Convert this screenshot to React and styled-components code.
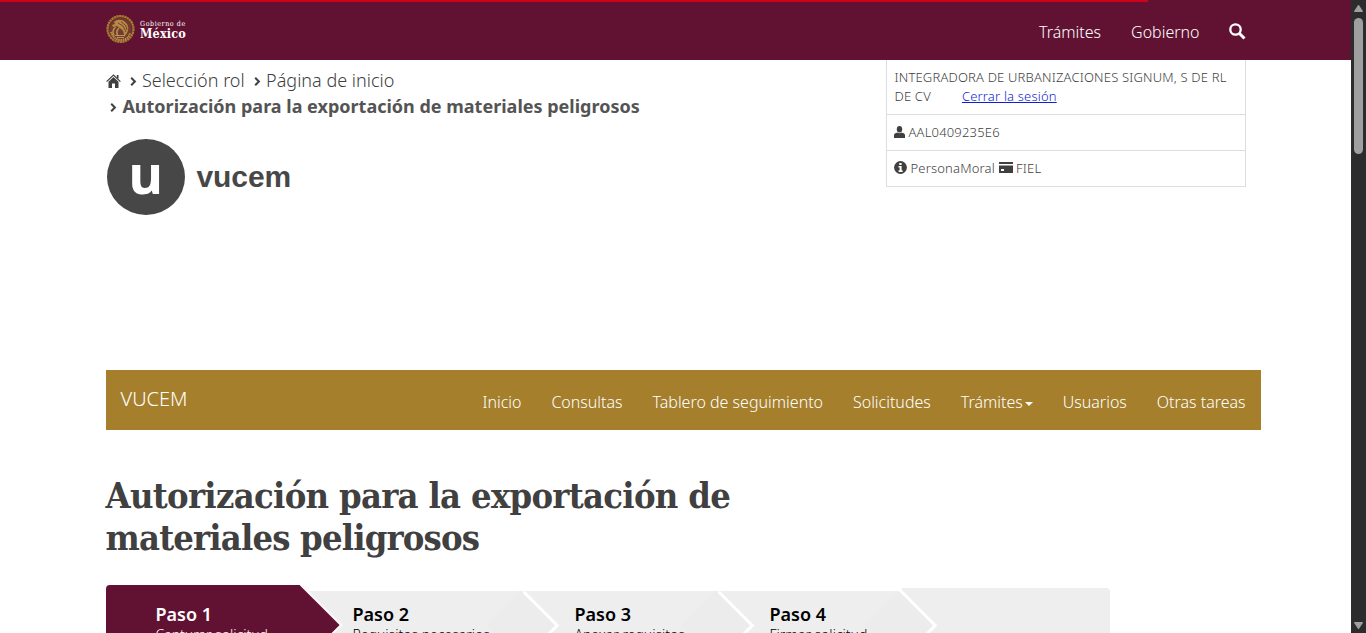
import React from "react";
import styled, { createGlobalStyle, css } from "styled-components";

const Global = createGlobalStyle`
  * { box-sizing: border-box; }
  html, body { margin: 0; padding: 0; overflow: hidden; background: #fff; }
  body { font-family: "Noto Sans", "Open Sans", sans-serif; font-weight: 300; color: #404041; }
`;

const Page = styled.div`
  display: flex;
  width: 1366px;
  height: 633px;
  overflow: hidden;
`;
const Content = styled.div`
  width: 1351px;
  height: 633px;
  overflow: hidden;
`;
const Progress = styled.div`
  width: 1148px;
  height: 2px;
  background: #d0021b;
`;
const Header = styled.header`
  height: 60px;
  background: #611232;
`;
const HeaderRow = styled.div`
  display: flex;
  justify-content: space-between;
  padding: 0 105px 0 106px;
  height: 58px;
`;
const Brand = styled.div`
  display: flex;
  align-items: flex-start;
  gap: 5px;
  padding-top: 12px;
`;
const BrandText = styled.div`
  display: flex;
  flex-direction: column;
  padding-top: 6px;
  color: #fff;
  font-family: "DejaVu Serif Condensed", "DejaVu Serif", serif;
`;
const BrandSmall = styled.span`
  font-size: 7px;
  font-weight: 400;
  line-height: 8px;
  letter-spacing: 0.6px;
`;
const BrandLarge = styled.span`
  font-size: 12.5px;
  font-weight: 700;
  line-height: 11px;
  letter-spacing: 0.15px;
`;
const TopNav = styled.nav`
  display: flex;
  gap: 30px;
  padding-top: 19px;
`;
const NavItem = styled.a`
  color: #fff;
  font-size: 16px;
  line-height: 23px;
  white-space: nowrap;
`;
const SearchSlot = styled.span`
  display: flex;
  width: 16.5px;
  padding-top: 2px;
  svg { flex: none; margin-left: -0.5px; }
`;

const Intro = styled.section`
  display: flex;
  justify-content: space-between;
  height: 310px;
  padding: 0 105px 0 106px;
`;
const IntroLeft = styled.div`
  padding-top: 7px;
`;
const CrumbRow = styled.div`
  display: flex;
  align-items: center;
  height: 26px;
  font-size: 18px;
  line-height: 26px;
  white-space: nowrap;
  ${(p) => p.$active && css`
    font-weight: 700;
    color: #545454;
    padding-left: 4px;
  `}
`;
const Crumb = styled.span`
  margin-right: 9px;
`;
const Chevron = styled.svg`
  width: 7px;
  height: 9px;
  margin-right: 5.4px;
  margin-top: 3px;
`;
const House = styled.svg`
  width: 15px;
  height: 14px;
  margin-left: -0.5px;
  margin-right: 9px;
  margin-top: 1px;
`;
const Logo = styled.div`
  display: flex;
  align-items: center;
  gap: 12px;
  margin: 20px 0 0 1px;
  color: #474747;
`;
const LogoMark = styled.div`
  display: flex;
  justify-content: center;
  width: 77.5px;
  height: 76px;
  border-radius: 50%;
  background: #474747;
  color: #fff;
  font: 700 53px/70px "Noto Sans", sans-serif;
`;
const LogoName = styled.span`
  font: 700 30px/36px "Liberation Sans", sans-serif;
  letter-spacing: -0.1px;
`;

const UserTable = styled.div`
  width: 360px;
  height: 127px;
  border: 1px solid #ddd;
  border-top: 0;
  font-size: 13px;
  line-height: 19px;
  letter-spacing: 0.18px;
`;
const UserCell = styled.div`
  display: flex;
  align-items: center;
  height: 36px;
  padding-left: 7px;
  border-top: 1px solid #ddd;
  white-space: nowrap;
  svg { margin-right: 3.5px; margin-top: -2px; flex: none; }
`;
const UserName = styled.div`
  height: 54px;
  padding: 8px 0 0 7.5px;
  white-space: nowrap;
`;
const Logout = styled.a`
  margin-left: 31px;
  color: #0f1fd6;
  text-decoration: underline;
`;

const MainBar = styled.nav`
  display: flex;
  justify-content: space-between;
  width: 1155px;
  height: 60px;
  margin-left: 106px;
  padding: 0 15.4px 0 14.5px;
  background: #a57f2c;
`;
const BarBrand = styled.span`
  color: #fff;
  font-size: 20px;
  line-height: 58px;
`;
const BarLinks = styled.div`
  display: flex;
  gap: 29.9px;
  padding-top: 21px;
`;
const Caret = styled.span`
  display: inline-block;
  margin-left: 2px;
  vertical-align: middle;
  border: 4px solid transparent;
  border-top-color: #fff;
  border-bottom: 0;
`;

const Title = styled.h1`
  margin: 44px 0 0 105.5px;
  font: 700 36px/42px "DejaVu Serif Condensed", "DejaVu Serif", serif;
  color: #404041;
  white-space: nowrap;
`;
const TitleLine = styled.span`
  display: block;
  letter-spacing: ${(p) => p.$ls}px;
`;

const Wizard = styled.div`
  display: flex;
  align-items: flex-start;
  width: 1004px;
  height: 80px;
  margin: 27px 0 0 106px;
`;
const Step = styled.div`
  position: relative;
  flex: none;
  width: ${(p) => p.$w}px;
  height: 80px;
  margin-top: 6px;
  padding: 11px 0 0 ${(p) => p.$pl}px;
  background: #eee;
  color: #000;
  z-index: ${(p) => p.$z};
  &::after {
    content: "";
    position: absolute;
    z-index: -1;
    top: 10px;
    right: -25px;
    width: 49px;
    height: 49px;
    transform: rotate(45deg);
    background: #ececec;
    box-shadow: 3px -3px 0 #fff;
  }
  ${(p) => p.$current && css`
    margin-top: 0;
    padding-top: 17px;
    background: #611232;
    color: #fff;
    border-radius: 4px 0 0 0;
    &::after {
      top: 12px;
      right: -28px;
      width: 56px;
      height: 56px;
      background: #611232;
      box-shadow: 2px -2px 0 #fff;
    }
  `}
`;
const WizardEnd = styled.div`
  flex: 1;
  height: 80px;
  margin-top: 3px;
  margin-left: 4px;
  background: #eee;
  border-radius: 0 4px 0 0;
`;
const StepName = styled.div`
  font-size: 18px;
  font-weight: 600;
  line-height: 24px;
  white-space: nowrap;
`;
const StepText = styled.div`
  font-size: 14px;
  line-height: 17px;
  white-space: nowrap;
`;

const ScrollTrack = styled.div`
  display: flex;
  flex-direction: column;
  align-items: center;
  width: 15px;
  height: 633px;
  padding: 5px 0 4px;
  background: #2c2c2c;
`;
const Thumb = styled.div`
  width: 9px;
  height: 136px;
  margin: 6px 0 auto;
  border-radius: 5px;
  background: #9f9f9f;
`;

const Emblem = () => (
  <svg width="29" height="30" viewBox="0 0 29 30" fill="none">
    <circle cx="14.5" cy="15" r="13" fill="#74392f" stroke="#a57f2c" strokeWidth="2.2" strokeDasharray="2.2 .5" />
    <circle cx="14.5" cy="15" r="11.2" stroke="#6f2a33" strokeWidth=".9" />
    <path d="M8 8c3-3 8-3 11 0 4 3 4 8 2 11l-3 4c0-3 0-6-3-8l-4-3-4 1-1-2 3-1z" fill="#b38c42" />
    <path d="M9.500 13c-3 3-3 6-1.500 8.500M13 14c-2 2-3 5-1 8" stroke="#b58f4a" strokeWidth="1.6" />
    <path d="M12 9l5 3 3 6M15 7.500l5 4.500 1 4" stroke="#6f2a33" strokeWidth=".8" />
    <path d="M5 18c2 6 6 8 10 8s8-2 9-7" stroke="#b58f4a" strokeWidth="2" strokeDasharray="1.6 .6" />
    <path d="M9 21.500h10M11 23.500h7" stroke="#bc955c" strokeWidth="1.1" />
  </svg>
);
const Chev = () => (
  <Chevron viewBox="0 0 7 9" fill="none" stroke="#404041" strokeWidth="2">
    <path d="M1.2 .8 4.9 4.5 1.2 8.2" />
  </Chevron>
);
const Arrow = ({ down }) => (
  <svg width="9" height="7" viewBox="0 0 9 7" fill="#9f9f9f">
    <path d={down ? "M0 .7Q0 0 .8 0h7.4Q9 0 9 .7L5.2 6.4q-.7 1-1.4 0z" : "M0 6.3Q0 7 .8 7h7.4Q9 7 9 6.3L5.2.6q-.7-1-1.4 0z"} />
  </svg>
);

export default function App() {
  return (
    <>
      <Global />
      <Page>
        <Content>
          <Header>
            <Progress />
            <HeaderRow>
              <Brand>
                <Emblem />
                <BrandText>
                  <BrandSmall>Gobierno de</BrandSmall>
                  <BrandLarge>México</BrandLarge>
                </BrandText>
              </Brand>
              <TopNav>
                <NavItem>Trámites</NavItem>
                <NavItem>Gobierno</NavItem>
                <SearchSlot>
                  <svg width="17" height="17" viewBox="0 0 17 17" fill="none" stroke="#fff">
                    <circle cx="6.5" cy="6.5" r="5.2" strokeWidth="2.3" />
                    <path d="m10.5 10.5 5 5" strokeWidth="3" />
                  </svg>
                </SearchSlot>
              </TopNav>
            </HeaderRow>
          </Header>
          <Intro>
            <IntroLeft>
              <CrumbRow>
                <House viewBox="0 0 15 14">
                  <path d="M.6 7.6 7.5 1l6.9 6.6" fill="none" stroke="#404041" strokeWidth="1.2" />
                  <path d="M2.5 7.8 7.5 3l5 4.8V14H9V9.5H6V14H2.5z" fill="#404041" />
                  <path d="M10.8 1h1.7v4l-1.7-1.7z" fill="#404041" />
                </House>
                <Chev />
                <Crumb>Selección rol</Crumb>
                <Chev />
                <Crumb>Página de inicio</Crumb>
              </CrumbRow>
              <CrumbRow $active>
                <Chev />
                <Crumb>Autorización para la exportación de materiales peligrosos</Crumb>
              </CrumbRow>
              <Logo>
                <LogoMark>u</LogoMark>
                <LogoName>vucem</LogoName>
              </Logo>
            </IntroLeft>
            <UserTable>
              <UserName>
                INTEGRADORA DE URBANIZACIONES SIGNUM, S DE RL
                <br />
                DE CV
                <Logout>Cerrar la sesión</Logout>
              </UserName>
              <UserCell>
                <svg width="11" height="12" viewBox="0 0 11 12" fill="#404041">
                  <ellipse cx="5.5" cy="3.2" rx="2.7" ry="3.2" />
                  <path d="M0 12V9.2Q0 7.5 3.6 6.6q1.9 1.2 3.8 0Q11 7.5 11 9.2V12z" />
                </svg>
                AAL0409235E6
              </UserCell>
              <UserCell>
                <svg width="13" height="13" viewBox="0 0 13 13">
                  <circle cx="6.5" cy="6.5" r="6.4" fill="#404041" />
                  <path d="M5.3 2h2.3v2H5.3zM4.5 5h3.1v4.2h1V11h-4V9.2h1V6.500h-1.100z" fill="#fff" />
                </svg>
                <span>PersonaMoral&nbsp;</span>
                <svg width="14" height="11" viewBox="0 0 14 11">
                  <path d="M0 0h14v2H0zM0 3.5h14V11H0z" fill="#404041" />
                  <path d="M2 7h3v2H2z" fill="#fff" />
                </svg>
                FIEL
              </UserCell>
            </UserTable>
          </Intro>
          <MainBar>
            <BarBrand>VUCEM</BarBrand>
            <BarLinks>
              <NavItem>Inicio</NavItem>
              <NavItem>Consultas</NavItem>
              <NavItem>Tablero de seguimiento</NavItem>
              <NavItem>Solicitudes</NavItem>
              <NavItem>Trámites<Caret /></NavItem>
              <NavItem>Usuarios</NavItem>
              <NavItem>Otras tareas</NavItem>
            </BarLinks>
          </MainBar>
          <Title>
            <TitleLine $ls={-0.69}>Autorización para la exportación de</TitleLine>
            <TitleLine $ls={-0.82}>materiales peligrosos</TitleLine>
          </Title>
          <Wizard>
            <Step $current $w={194} $pl={49.5} $z={4}>
              <StepName>Paso 1</StepName>
              <StepText>Capturar solicitud</StepText>
            </Step>
            <Step $w={220} $pl={52.5} $z={3}>
              <StepName>Paso 2</StepName>
              <StepText>Requisitos necesarios</StepText>
            </Step>
            <Step $w={195} $pl={54.5} $z={2}>
              <StepName>Paso 3</StepName>
              <StepText>Anexar requisitos</StepText>
            </Step>
            <Step $w={183} $pl={54.5} $z={1}>
              <StepName>Paso 4</StepName>
              <StepText>Firmar solicitud</StepText>
            </Step>
            <WizardEnd />
          </Wizard>
        </Content>
        <ScrollTrack>
          <Arrow />
          <Thumb />
          <Arrow down />
        </ScrollTrack>
      </Page>
    </>
  );
}
